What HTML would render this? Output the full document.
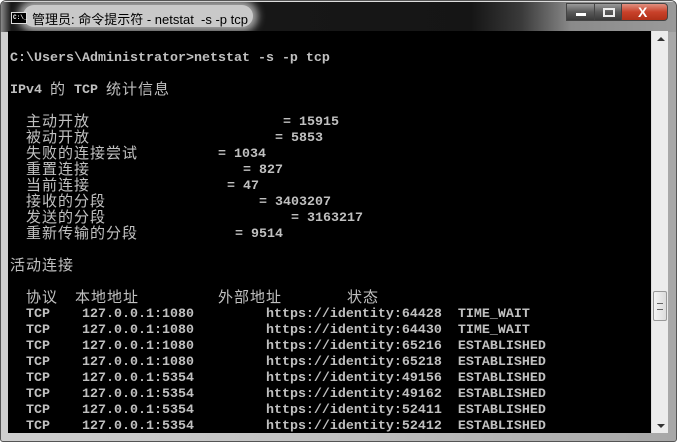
<!DOCTYPE html>
<html><head><meta charset="utf-8"><style>
html,body{margin:0;padding:0;width:677px;height:442px;overflow:hidden;background:#fff}
.win{position:absolute;left:0;top:0;width:675px;height:440px;border:1px solid #555;border-radius:6px 6px 3px 3px;background:linear-gradient(90deg,#cfcfcf 0,#c4c4c4 40%,#a8a8a8 100%);overflow:hidden}
.tb{position:absolute;left:0;top:0;width:675px;height:30px;background:linear-gradient(90deg,#8a8a8a 0,#1a1a1a 10px,#151515 470px,#3a3a3a 520px,#8a8a8a 570px,#9a9a9a 100%);border-top:1px solid #ddd}
.glow{position:absolute;left:22px;top:3px;width:230px;height:22px;background:#c9c9c9;border-radius:11px;box-shadow:0 0 8px 5px rgba(200,200,200,.8)}
.title{position:absolute;left:31px;top:7px;font:13px "Liberation Sans","Noto Sans CJK SC",sans-serif;color:#000;white-space:nowrap}
.icon{position:absolute;left:10px;top:10px;width:14px;height:10px;background:#000;border:1px solid #ddd;font:bold 6px "Liberation Mono",monospace;color:#fff;line-height:10px;text-indent:1px}
.btn{position:absolute;top:1px;height:18px;border:1px solid #444;box-sizing:border-box}
.con{position:absolute;left:8px;top:31px;width:643px;height:402px;background:#000}
.sb{position:absolute;left:651px;top:31px;width:16px;height:402px;background:#ececec;border-left:1px solid #ddd}
.t{position:absolute;white-space:pre;color:#c0c0c0;font:bold 13.33px "Liberation Mono",monospace;line-height:16px;margin-top:2px}
.c{position:absolute;white-space:pre;color:#c0c0c0;font:15px "Noto Sans CJK SC","WenQuanYi Zen Hei",sans-serif;line-height:16px;letter-spacing:1px}
</style></head><body>
<div class="win">
<div class="tb"><div class="glow"></div><div class="icon">C:\_</div><div class="title">管理员: 命令提示符 - netstat &nbsp;-s -p tcp</div>
<div class="btn" style="left:565px;width:29px;background:linear-gradient(#9a9a9a,#5a5a5a 50%,#3a3a3a)"><div style="position:absolute;left:9px;top:9px;width:10px;height:3px;background:#fff"></div></div>
<div class="btn" style="left:593px;width:28px;background:linear-gradient(#9a9a9a,#5a5a5a 50%,#3a3a3a)"><div style="position:absolute;left:8px;top:4px;width:8px;height:5px;border:2px solid #eee"></div></div>
<div class="btn" style="left:620px;width:47px;background:linear-gradient(#e09080,#c8412a 50%,#b03018);border-radius:0 4px 4px 0"><div style="position:absolute;left:16px;top:0px;color:#fff;font:bold 14px 'Liberation Sans',sans-serif">X</div></div>
</div>
</div>
<div class="con"></div>
<div class="sb">
<div style="position:absolute;left:5px;top:6px;width:0;height:0;border-left:4px solid transparent;border-right:4px solid transparent;border-bottom:4px solid #333"></div>
<div style="position:absolute;left:1px;top:260px;width:12px;height:28px;background:linear-gradient(90deg,#f4f4f4,#dcdcdc);border:1px solid #999;border-radius:2px"></div>
<div style="position:absolute;left:5px;top:272px;width:6px;height:5px;border-top:1px solid #666;border-bottom:1px solid #666"></div>
<div style="position:absolute;left:5px;top:393px;width:0;height:0;border-left:4px solid transparent;border-right:4px solid transparent;border-top:4px solid #333"></div>
</div>

<div class="t" style="left:10px;top:49px">C:\Users\Administrator&gt;netstat -s -p tcp</div>
<div class="t" style="left:10px;top:81px">IPv4</div><div class="c" style="left:50px;top:81px">的</div><div class="t" style="left:74px;top:81px">TCP</div><div class="c" style="left:106px;top:81px">统计信息</div>

<div class="c" style="left:26px;top:113px">主动开放</div><div class="t" style="left:283px;top:113px">= 15915</div>
<div class="c" style="left:26px;top:129px">被动开放</div><div class="t" style="left:275px;top:129px">= 5853</div>
<div class="c" style="left:26px;top:145px">失败的连接尝试</div><div class="t" style="left:218px;top:145px">= 1034</div>
<div class="c" style="left:26px;top:161px">重置连接</div><div class="t" style="left:243px;top:161px">= 827</div>
<div class="c" style="left:26px;top:177px">当前连接</div><div class="t" style="left:227px;top:177px">= 47</div>
<div class="c" style="left:26px;top:193px">接收的分段</div><div class="t" style="left:259px;top:193px">= 3403207</div>
<div class="c" style="left:26px;top:209px">发送的分段</div><div class="t" style="left:291px;top:209px">= 3163217</div>
<div class="c" style="left:26px;top:225px">重新传输的分段</div><div class="t" style="left:235px;top:225px">= 9514</div>

<div class="c" style="left:10px;top:257px">活动连接</div>
<div class="c" style="left:26px;top:289px">协议</div><div class="c" style="left:75px;top:289px">本地地址</div><div class="c" style="left:218px;top:289px">外部地址</div><div class="c" style="left:347px;top:289px">状态</div>

<div class="t" style="left:26px;top:305px">TCP    127.0.0.1:1080         https://identity:64428  TIME_WAIT</div>
<div class="t" style="left:26px;top:321px">TCP    127.0.0.1:1080         https://identity:64430  TIME_WAIT</div>
<div class="t" style="left:26px;top:337px">TCP    127.0.0.1:1080         https://identity:65216  ESTABLISHED</div>
<div class="t" style="left:26px;top:353px">TCP    127.0.0.1:1080         https://identity:65218  ESTABLISHED</div>
<div class="t" style="left:26px;top:369px">TCP    127.0.0.1:5354         https://identity:49156  ESTABLISHED</div>
<div class="t" style="left:26px;top:385px">TCP    127.0.0.1:5354         https://identity:49162  ESTABLISHED</div>
<div class="t" style="left:26px;top:401px">TCP    127.0.0.1:5354         https://identity:52411  ESTABLISHED</div>
<div class="t" style="left:26px;top:417px">TCP    127.0.0.1:5354         https://identity:52412  ESTABLISHED</div>
</body></html>
